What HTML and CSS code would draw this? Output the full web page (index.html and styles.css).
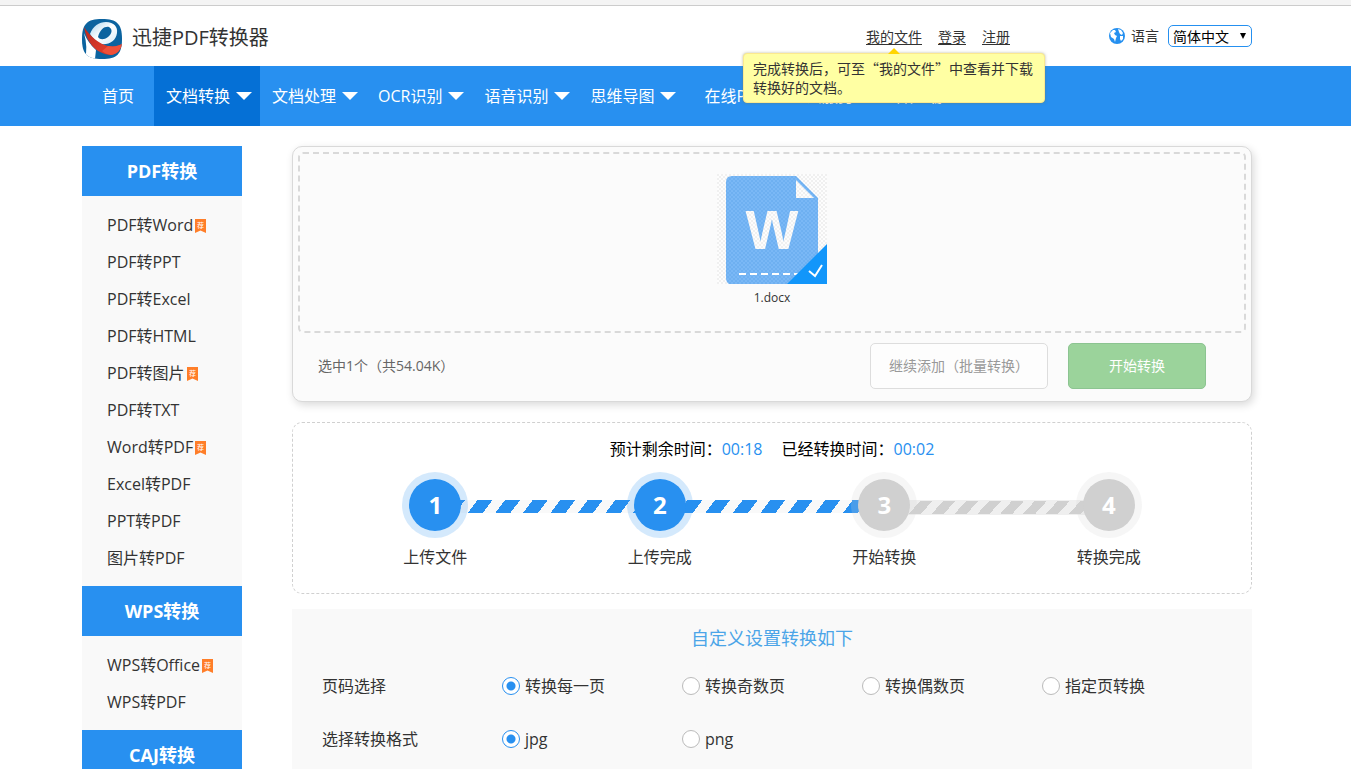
FILE: index.html
```html
<!DOCTYPE html>
<html lang="zh-CN">
<head>
<meta charset="utf-8">
<title>迅捷PDF转换器</title>
<link rel="stylesheet" href="styles.css">
</head>
<body>
<svg class="defs" width="0" height="0" aria-hidden="true">
  <symbol id="badge" viewBox="0 0 11 14">
    <path d="M0 0H11V14L5.500 11.500L0 14Z" fill="#ff7e29"/>
    <text x="5.500" y="8.500" text-anchor="middle" font-size="7" fill="#fff">荐</text>
  </symbol>
</svg>

<header class="top band">
  <div class="container top-row">
    <a class="brand" href="#">
      <svg width="40" height="40" viewBox="0 0 40 40" aria-hidden="true">
        <defs>
          <linearGradient id="lg-red" x1="0" y1="0" x2="1" y2="1"><stop offset="0" stop-color="#b8281f"/><stop offset=".6" stop-color="#d93a2a"/><stop offset="1" stop-color="#d9351f"/></linearGradient>
          <linearGradient id="lg-p" x1="0" y1="0" x2="1" y2="1"><stop offset="0" stop-color="#a9d4ee"/><stop offset=".5" stop-color="#fff"/><stop offset="1" stop-color="#d6ebf7"/></linearGradient>
          <clipPath id="lg-clip"><path d="M20 0C35 0 40 5 40 20S35 40 20 40S0 35 0 20S5 0 20 0Z"/></clipPath>
        </defs>
        <g clip-path="url(#lg-clip)">
          <rect width="40" height="40" fill="#0b639f"/>
          <path d="M2 14Q6 24 14 31L13 40H3Q6 28 2 14Z" fill="#fff"/>
          <path fill-rule="evenodd" d="M8 15C11 7 17 3 24 3C32 3 36 8 35 14C34 22 27 26 19 25C15 23 11 20 8 15ZM16 18C18 21 22 21 26 18C30 15 31 10 27 8C23 7 18 10 16 18Z" fill="url(#lg-p)"/>
          <path d="M2 8C8 17 17 25 26 27C32 28 36 27 40 25C39 31 35 35 29 36C15 35 5 25 2 8Z" fill="url(#lg-red)"/>
          <path d="M26 27C32 28 36 27 40 25C39 31 35 35 29 36C25 35 22 34 20 32Z" fill="#ef5038"/>
        </g>
      </svg>
      <span>迅捷PDF转换器</span>
    </a>
    <div class="user">
      <div class="files"><a href="#">我的文件</a>
        <div class="tip" role="tooltip">完成转换后，可至“我的文件”中查看并下载转换好的文档。</div>
      </div>
      <a href="#">登录</a>
      <a href="#">注册</a>
    </div>
    <div class="lang">
      <svg width="16" height="16" viewBox="0 0 16 16" aria-hidden="true">
        <circle cx="8" cy="8" r="8" fill="#2590f0"/>
        <path d="M1 5L4 2L6 2L7 4L5 5L6 7L8 8L7 10L6 14L5 11L2 9ZM9 1L12 2L14 5L13 7L11 6L10 4ZM11 8L14 8L14 11L12 13L11 11Z" fill="#fff"/>
      </svg>
      <label for="lang">语言</label>
      <span class="select-box"><select id="lang"><option>简体中文</option><option>English</option></select></span>
    </div>
  </div>
</header>

<nav class="nav band">
  <div class="container nav-row">
    <a class="plain" href="#">首页</a>
    <a class="menu active" href="#">文档转换</a>
    <a class="menu" href="#">文档处理</a>
    <a class="menu" href="#">OCR识别</a>
    <a class="menu" href="#">语音识别</a>
    <a class="menu" href="#">思维导图</a>
    <a class="plain" href="#">在线PDF</a>
    <a class="plain" href="#">云服务</a>
    <a class="plain" href="#">客户端</a>
  </div>
</nav>

<div class="band">
  <div class="container page">
    <aside class="side">
      <h2>PDF转换</h2>
      <ul>
        <li><a href="#">PDF转Word<svg class="badge"><use href="#badge"/></svg></a></li>
        <li><a href="#">PDF转PPT</a></li>
        <li><a href="#">PDF转Excel</a></li>
        <li><a href="#">PDF转HTML</a></li>
        <li><a href="#">PDF转图片<svg class="badge"><use href="#badge"/></svg></a></li>
        <li><a href="#">PDF转TXT</a></li>
        <li><a href="#">Word转PDF<svg class="badge"><use href="#badge"/></svg></a></li>
        <li><a href="#">Excel转PDF</a></li>
        <li><a href="#">PPT转PDF</a></li>
        <li><a href="#">图片转PDF</a></li>
      </ul>
      <h2>WPS转换</h2>
      <ul>
        <li><a href="#">WPS转Office<svg class="badge"><use href="#badge"/></svg></a></li>
        <li><a href="#">WPS转PDF</a></li>
      </ul>
      <h2>CAJ转换</h2>
    </aside>

    <main class="main">
      <section class="upload">
        <div class="drop">
          <svg width="110" height="110" viewBox="0 0 110 110" aria-hidden="true">
            <defs>
              <pattern id="chk" width="4" height="4" patternUnits="userSpaceOnUse"><rect width="4" height="4" fill="#fdfdfd"/><path d="M0 0H2V2H0ZM2 2H4V4H2Z" fill="#f0f0f0"/></pattern>
              <pattern id="chk-blue" width="4" height="4" patternUnits="userSpaceOnUse"><rect width="4" height="4" fill="#7ab8f6"/><path d="M0 0H2V2H0ZM2 2H4V4H2Z" fill="#6eb0f1"/></pattern>
            </defs>
            <rect width="110" height="110" fill="url(#chk)"/>
            <path d="M15 2H79L101 24V110H12Q9 108 9 104V8Q9 2 15 2Z" fill="url(#chk-blue)"/>
            <path d="M79 6V24H97Z" fill="url(#chk)"/>
            <text class="doc-letter" x="55" y="75" text-anchor="middle" fill="url(#chk)">W</text>
            <path d="M22 100H82" stroke="#fff" stroke-width="2" stroke-dasharray="7 4"/>
            <path d="M110 70V110H70Z" fill="#1296fa"/>
            <path d="M92 97L98 102L105 91" fill="none" stroke="#fff" stroke-width="2"/>
          </svg>
          <p>1.docx</p>
        </div>
        <div class="actions">
          <span class="count">选中1个（共54.04K）</span>
          <button class="btn add" type="button">继续添加（批量转换）</button>
          <button class="btn go" type="button">开始转换</button>
        </div>
      </section>

      <section class="progress">
        <p class="times"><span>预计剩余时间：<b>00:18</b></span><span>已经转换时间：<b>00:02</b></span></p>
        <ol class="steps">
          <li class="done from-first"><i>1</i><span>上传文件</span></li>
          <li class="done"><i>2</i><span>上传完成</span></li>
          <li><i>3</i><span>开始转换</span></li>
          <li><i>4</i><span>转换完成</span></li>
        </ol>
      </section>

      <form class="options">
        <h3>自定义设置转换如下</h3>
        <div class="opt-row" role="radiogroup" aria-labelledby="range">
          <span id="range">页码选择</span>
          <label><input type="radio" name="range" checked>转换每一页</label>
          <label><input type="radio" name="range">转换奇数页</label>
          <label><input type="radio" name="range">转换偶数页</label>
          <label><input type="radio" name="range">指定页转换</label>
        </div>
        <div class="opt-row" role="radiogroup" aria-labelledby="format">
          <span id="format">选择转换格式</span>
          <label><input type="radio" name="format" checked>jpg</label>
          <label><input type="radio" name="format">png</label>
        </div>
      </form>
    </main>
  </div>
</div>
</body>
</html>
```
FILE: styles.css
```css
* { box-sizing: border-box; }

body {
  margin: 0;
  height: 100vh;
  overflow: hidden;
  background: #fff;
  color: #333;
  font: 16px/20px "Open Sans", "Noto Sans CJK SC", sans-serif;
}

a { color: inherit; text-decoration: none; }
h2, h3, p, ul, ol { margin: 0; padding: 0; }
ul, ol { list-style: none; }
svg { display: block; }
.defs { position: absolute; }

.band { padding-right: 17px; }
.container { max-width: 1170px; margin: 0 auto; }

/* Header */
.top { border-top: 5px solid #f4f4f4; }
.top::before { content: ""; display: block; height: 1px; margin-right: -17px; background: #ccc; }
.top-row { display: flex; align-items: center; height: 60px; }
.brand { display: flex; align-items: center; gap: 10px; margin-right: auto; padding-top: 4px; font-size: 20px; line-height: 28px; }
.brand svg { margin-top: 2px; }
.user { display: flex; gap: 16px; margin-right: 99px; padding-top: 2px; font-size: 14px; }
.user a { text-decoration: underline; text-underline-offset: 2px; }
.files { position: relative; }
.tip {
  position: absolute;
  z-index: 2;
  top: 26px;
  left: 50%;
  width: 302px;
  margin-left: -151px;
  padding: 5px 9px;
  border: 1px solid #fbe98e;
  border-radius: 4px;
  background: #ffffa3;
  box-shadow: 0 0 3px rgba(120, 120, 60, .5);
  font-family: "Noto Sans CJK SC", sans-serif;
  line-height: 19px;
}
.tip::before {
  content: "";
  position: absolute;
  top: -6px;
  left: 50%;
  margin-left: -6px;
  border: 6px solid transparent;
  border-top: 0;
  border-bottom-color: #ffd500;
}
.lang { display: flex; align-items: center; font-size: 14px; }
.lang label { margin: 0 9px 0 6px; }
.select-box { position: relative; }
.select-box::after {
  content: "";
  position: absolute;
  top: 8px;
  right: 6px;
  border: 3px solid transparent;
  border-top: 6px solid #000;
  border-bottom: 0;
  pointer-events: none;
}
.lang select {
  display: block;
  appearance: none;
  width: 84px;
  height: 22px;
  padding: 0 4px;
  border: 1px solid #2590f0;
  border-radius: 5px;
  background: #fff;
  color: #000;
  font: 14px/20px "Noto Sans CJK SC", sans-serif;
}

/* Navigation */
.nav { background: #2890f0; color: #fff; }
.nav-row { display: flex; line-height: 60px; }
.plain { padding: 0 20px; }
.menu { display: flex; align-items: center; gap: 6px; padding: 0 8px 0 12px; }
.menu::after { content: ""; border: 8px solid transparent; border-top-color: #fff; border-bottom: 0; }
.active { background: #0570d6; }

/* Page body */
.page { display: flex; align-items: flex-start; gap: 50px; padding-top: 20px; }
.side { flex: 0 0 160px; background: #f9f9f9; }
.side h2 { background: #2890f0; color: #fff; text-align: center; font-size: 18px; line-height: 50px; }
.side ul { padding: 11px 0 9px 25px; }
.side a { display: flex; align-items: center; gap: 2px; line-height: 37px; }
.badge { width: 11px; height: 14px; }
.main { flex: 1; min-width: 0; }

/* Upload card */
.upload { padding: 5px; border: 1px solid #d9d9d9; border-radius: 10px; background: #fbfbfb; box-shadow: 2px 3px 8px rgba(0, 0, 0, .15); }
.drop { display: flex; flex-direction: column; align-items: center; gap: 5px; padding: 20px 0 24px; border: 2px dashed #d9d9d9; border-radius: 5px; }
.drop p { font-size: 12px; line-height: 18px; }
.doc-letter { font: bold 56px "Liberation Sans", sans-serif; }
.actions { display: flex; align-items: center; gap: 20px; padding: 10px 40px 7px 20px; }
.count { margin-right: auto; color: #666; font-size: 14px; }
.btn { height: 46px; padding: 0; border: 1px solid #ddd; border-radius: 5px; background: #fdfdfd; color: #999; font: inherit; font-size: 14px; }
.add { width: 178px; }
.go { width: 138px; border-color: #8cc491; background: #9bd39b; color: #fff; }

/* Conversion progress */
.progress { margin-top: 20px; padding: 16px 30px 26px; border: 1px dashed #d0d0d0; border-radius: 10px; }
.times { display: flex; justify-content: center; gap: 19px; color: #000; }
.times b { color: #2890f0; font-weight: normal; }
.steps { display: grid; grid-template-columns: repeat(4, 1fr); margin-top: 13px; }
.steps li { position: relative; display: flex; flex-direction: column; align-items: center; gap: 9px; }
.steps li:not(:last-child)::before {
  content: "";
  position: absolute;
  top: 28px;
  left: 50%;
  width: 100%;
  height: 13px;
  border: solid #efefef;
  border-width: 1px 0;
  background: repeating-linear-gradient(132deg, #d0d0d0 0 2px, #efefef 2px 10px, #d0d0d0 10px 17px);
}
.steps .done:not(:last-child)::before {
  border: 0;
  background: repeating-linear-gradient(127deg, #2890f0 0 12px, #f9f9f9 12px 22px);
}
.steps .from-first:not(:last-child)::before {
  background: repeating-linear-gradient(127deg, #2890f0 0 2px, #f9f9f9 2px 12px, #2890f0 12px 22px);
}
.steps i {
  position: relative;
  z-index: 1;
  width: 66px;
  height: 66px;
  border: 7px solid rgba(208, 208, 208, .2);
  border-radius: 50%;
  background: #d0d0d0 padding-box;
  color: #fff;
  text-align: center;
  font-style: normal;
  font-weight: bold;
  font-size: 24px;
  line-height: 52px;
}
.steps .done i { border-color: rgba(40, 144, 240, .2); background-color: #2890f0; }

/* Options */
.options { margin-top: 15px; padding: 16px 30px 20px; background: #f9f9f9; }
.options h3 { color: #4ba5e8; text-align: center; font-weight: normal; font-size: 18px; line-height: 26px; }
.opt-row { display: grid; grid-template-columns: repeat(5, 180px); height: 53px; align-items: center; }
.options h3 + .opt-row { margin-top: 8px; }
.opt-row label { display: flex; align-items: center; gap: 5px; }
.opt-row input { appearance: none; width: 18px; height: 18px; margin: 0; border: 1px solid #bbb; border-radius: 50%; background: #fff; }
.opt-row input:checked { border-color: #2890f0; background: radial-gradient(circle, #2890f0 4px, #fff 5px); }
```
